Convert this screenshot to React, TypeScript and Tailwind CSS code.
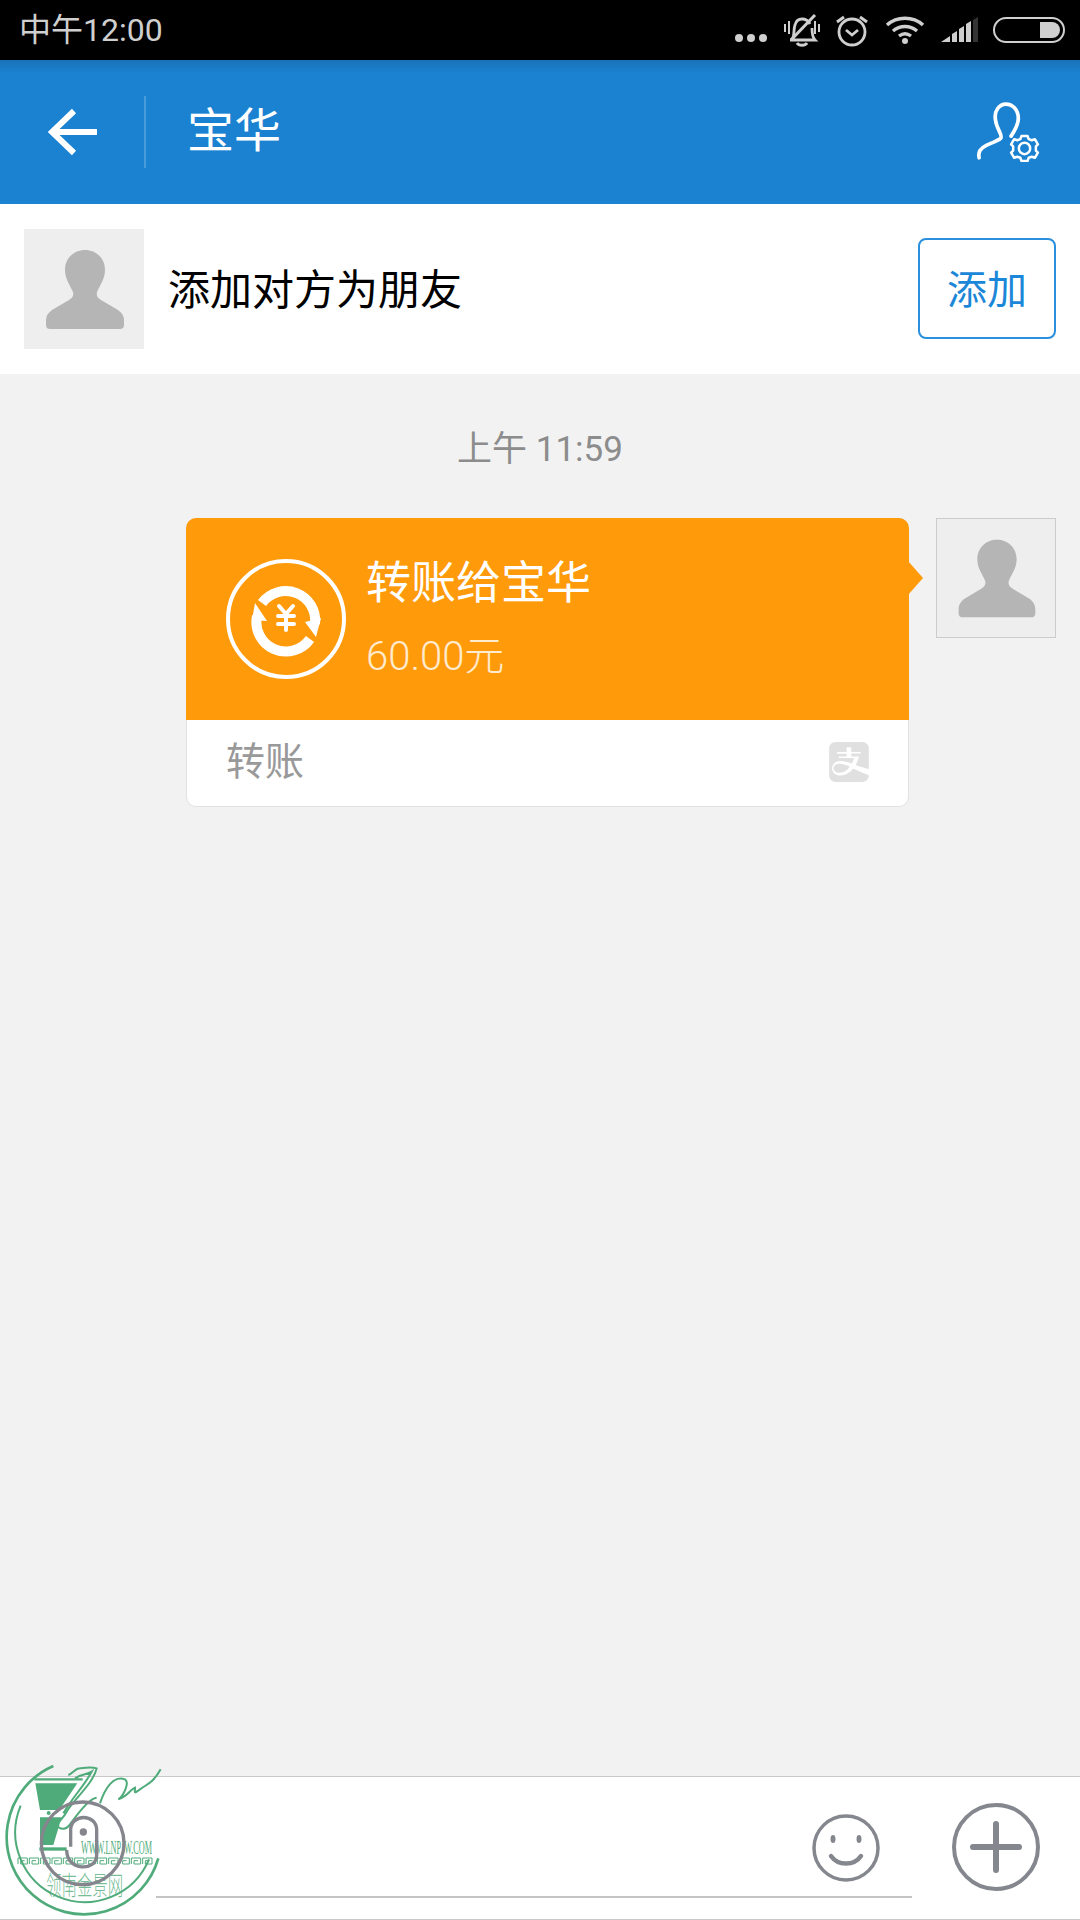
import { SiAlipay } from "react-icons/si";

function StatusIcons() {
  return (
    <div className="flex items-center text-[#cfcfcf]">
      <svg width="34" height="10" viewBox="0 0 34 10" className="mt-[16px] fill-current">
        <circle cx="5" cy="5" r="4" />
        <circle cx="17" cy="5" r="4" />
        <circle cx="29" cy="5" r="4" />
      </svg>
      <svg width="36" height="33" viewBox="0 0 36 33" className="ml-[16px] fill-none stroke-current" strokeWidth="2.8">
        <path d="M8 26c3-4 1-9 3-15 1-4 4-6 7-6 3 0 6 1 8 5M28 14c0 5 0 9 3 12H6" />
        <path d="M31 1 7 26" strokeWidth="3" />
        <path d="M13 29c2 3 8 3 10 0" strokeWidth="3" />
        <path d="M1 10v8M5 7v13M31 7v13M35 10v8" strokeWidth="2" />
      </svg>
      <svg width="34" height="33" viewBox="0 0 34 33" className="ml-[15px] fill-none stroke-current" strokeWidth="2.8">
        <circle cx="17" cy="18" r="13" />
        <path d="M11 16l6 5 6-5" />
        <path d="M2 8l7-5M32 8l-7-5" strokeWidth="3" />
      </svg>
      <svg width="40" height="30" viewBox="0 0 40 30" className="ml-[16px] fill-none stroke-current" strokeWidth="3.4">
        <path d="M2 10c10-9 26-9 36 0M8 16c7-6 17-6 24 0M14 21c4-3 8-3 12 0" />
        <circle cx="20" cy="26" r="3" className="fill-current stroke-none" />
      </svg>
      <svg width="38" height="26" viewBox="0 0 38 26" className="ml-[16px] fill-current">
        <path d="M0 25 9 19v6zM11 17l5-3v11h-5zM18 12l5-3v16h-5zM25 7l5-3v21h-5z" />
        <path d="M32 3l5-3v25h-5z" className="fill-[#333333]" />
      </svg>
      <div className="ml-[14px] flex h-[26px] w-[72px] justify-end rounded-[13px] border-[2px] border-current p-[3px]">
        <div className="h-full w-[20px] rounded-r-[9px] bg-current" />
      </div>
    </div>
  );
}

function Avatar({ bordered }: { bordered?: boolean }) {
  return (
    <div className={`h-[120px] w-[120px] shrink-0 bg-[#eeeeee] ${bordered ? "border border-[#cccccc]" : ""}`}>
      <svg viewBox="0 0 120 120" className="h-full w-full fill-[#b5b5b5]">
        <path d="M61 21c-11 0-20 8-20 20 0 9 5 15 8 22 1 4-1 6-4 8l-17 10c-4 3-6 6-6 11v4c0 3 2 4 4 4h70c2 0 4-1 4-4v-4c0-5-2-8-6-11l-17-10c-3-2-5-4-4-8 3-7 8-13 8-22 0-12-9-20-20-20z" />
      </svg>
    </div>
  );
}

function TransferIcon() {
  return (
    <svg viewBox="-60 -60 120 120" className="h-[120px] w-[120px] shrink-0 fill-none stroke-white">
      <circle r="58" strokeWidth="4" />
      <path d="M-24-16A29.5 29.5 0 0 1 29 5" strokeWidth="10" />
      <path d="M24 20A29.5 29.5 0 0 1-29-3" strokeWidth="10" />
      <path d="M19 3 35-1 30 18Z" className="fill-white stroke-none" />
      <path d="M-19 2-34 1-31-16Z" className="fill-white stroke-none" />
      <path d="M-7-13 0-5 7-13M-8-3H8M-8 5H8M0-5V11" strokeWidth="4" strokeLinecap="round" />
    </svg>
  );
}

// greek-key band running under the url in the watermark
const keyUnits = Array.from({ length: 12 }, (_, i) => 54 + i * 34);

function Watermark() {
  const green = "#4fab7a";
  return (
    <svg viewBox="0 0 600 540" className="pointer-events-none absolute left-0 top-[1740px] h-[180px] w-[200px]">
      <g fill="none" stroke={green}>
        <path d="M160 78A232 232 0 1 0 475 355" strokeWidth="8" />
        <path d="M62 197A208 208 0 0 0 447 358" strokeWidth="6" />
        <path d="M103 118H248" strokeWidth="7" />
        <path d="M205 105c15-5 20-20 35-20 15-2 35-5 50 0-10 45-70 95-90 130-8 15-18 25-30 38 10 20 30 15 40 0 25-35 60-80 80-80M225 115c20-15 35-10 50-20-20 40-60 80-85 125M300 190c15-45 40-85 75-72 15 10-5 50-20 60 30-10 35-30 50-35 0 15-5 20 15 5 20-15 40-20 62-60" strokeWidth="6" />
      </g>
      <path d="M106 130H232L178 210H120Z" fill={green} />
      <path d="M120 232H185L160 315H120Z" fill={green} />
      <path d="M118 322H200V332H118Z" fill={green} />
      <circle cx="146" cy="219" r="6" fill={green} />
      <g fill="none" stroke={green} strokeWidth="3">
        {keyUnits.map((x) => (
          <path key={x} d={`M${x} 372V354H${x + 28}V372H${x + 8}V362H${x + 20}`} />
        ))}
      </g>
      <g transform="translate(243 341) scale(0.457 1)">
        <text fill={green} fontSize="54" fontFamily="'Liberation Serif', serif">
          WWW.LNPJW.COM
        </text>
      </g>
      <g transform="translate(138 464) scale(0.58 1)">
        <text fill={green} fontSize="80" fontWeight="300" fillOpacity="0.8" fontFamily="'Noto Sans CJK SC', sans-serif">
          领南金景网
        </text>
      </g>
      <g fill="none" stroke="#85858d" strokeWidth="10">
        <circle cx="248" cy="310" r="124" />
        <path d="M212 320V270c0-50 78-50 78 0v75c0 50-90 50-90-15" />
        <circle cx="250" cy="276" r="11" fill="#85858d" stroke="none" />
      </g>
    </svg>
  );
}

export default function App() {
  return (
    <div className="relative flex h-[1920px] w-[1080px] flex-col overflow-hidden bg-[#f2f2f2] font-['Roboto','Noto_Sans_CJK_SC',sans-serif]">
      <div className="flex h-[60px] shrink-0 items-center justify-between bg-black pl-[19px] pr-[15px]">
        <span className="text-[32px] leading-none text-[#cfcfcf]">中午12:00</span>
        <StatusIcons />
      </div>

      <header className="flex h-[144px] shrink-0 items-center bg-[linear-gradient(#1a72b8,#1b82d2_14px)] text-white">
        <div className="flex h-[72px] w-[146px] items-center justify-center border-r-2 border-white/20 pl-[1px]">
          <svg width="50" height="48" viewBox="0 0 50 48" className="fill-none stroke-white" strokeWidth="6">
            <path d="M49 24H5M26 3 4 24l22 21" />
          </svg>
        </div>
        <h1 className="mb-[3px] ml-[41px] flex-1 text-[47px] font-normal leading-none">宝华</h1>
        <svg width="64" height="62" viewBox="0 0 62 60" className="mr-[40px] mt-[1px] fill-none stroke-white">
          <path d="M3 54c-1-6 1-9 7-12 6-3 11-4 14-7 2-3-4-9-5-17C17 8 23 2 29 2s12 5 12 14c0 6-3 11-7 17" strokeWidth="3.6" strokeLinecap="round" />
          <circle cx="47" cy="45" r="5.5" strokeWidth="2.4" />
          <path d="M44 33h6l1 3 3 1 3-1 3 5-2 2v4l2 2-3 5-3-1-3 1-1 3h-6l-1-3-3-1-3 1-3-5 2-2v-4l-2-2 3-5 3 1 3-1z" strokeWidth="2.4" strokeLinejoin="round" />
        </svg>
      </header>

      <div className="flex h-[170px] shrink-0 items-center bg-white px-[24px]">
        <Avatar />
        <span className="ml-[24px] flex-1 pt-[4px] text-[42px] leading-none text-black">添加对方为朋友</span>
        <button className="mb-[1px] h-[101px] w-[138px] rounded-[8px] border-2 border-[#2a8fdc] pt-[4px] text-[40px] leading-none text-[#1b87d8]">添加</button>
      </div>

      <main className="flex flex-1 flex-col">
        <div className="mt-[54px] text-center text-[35px] leading-[44px] text-[#8c8c8c]">上午 11:59</div>
        <div className="mt-[46px] flex items-start pl-[186px] pr-[24px]">
          <div className="relative flex h-[289px] w-[723px] flex-col rounded-[10px] border border-[#e2e2e2] bg-white">
            <div className="-m-px flex h-[202px] items-center rounded-t-[10px] bg-[#ff9a0a] pl-[40px]">
              <TransferIcon />
              <div className="ml-[20px] flex flex-col">
                <span className="mb-[31px] text-[45px] leading-none text-white">转账给宝华</span>
                <span className="text-[40px] font-light leading-none text-white/80">60.00元</span>
              </div>
            </div>
            <div className="flex flex-1 items-center justify-between pl-[39px] pr-[39px]">
              <span className="text-[39px] leading-none text-[#999999]">转账</span>
              <SiAlipay className="mb-[2px] text-[40px] text-[#e0e0e0]" />
            </div>
            <div className="absolute right-[-15px] top-[42px] h-[34px] w-[15px] bg-[#ff9a0a] [clip-path:polygon(0_0,100%_50%,0_100%)]" />
          </div>
          <div className="ml-[27px]">
            <Avatar bordered />
          </div>
        </div>
      </main>

      <footer className="flex h-[144px] shrink-0 items-start border-y border-[#c8c8c8] bg-white pl-[156px]">
        <div className="flex h-[121px] w-[756px] shrink-0 items-start justify-end border-b-2 border-[#c4c4c4] pr-[31px] pt-[36px]">
          <svg width="70" height="70" viewBox="0 0 70 70" className="fill-none stroke-[#85878e]" strokeWidth="3.5">
            <circle cx="35" cy="35" r="32" />
            <path d="M20 43c7 10 23 10 30 0" strokeWidth="4.5" strokeLinecap="round" />
            <ellipse cx="22" cy="26" rx="1.5" ry="3" fill="#85878e" strokeWidth="2" />
            <ellipse cx="48" cy="26" rx="1.5" ry="3" fill="#85878e" strokeWidth="2" />
          </svg>
        </div>
        <svg width="90" height="90" viewBox="0 0 90 90" className="ml-[39px] mt-[25px] shrink-0 fill-none stroke-[#85878e]" strokeWidth="4">
          <circle cx="45" cy="45" r="42" />
          <path d="M45 22V68M22 45H68" strokeWidth="6" strokeLinecap="round" />
        </svg>
      </footer>

      <Watermark />
    </div>
  );
}
